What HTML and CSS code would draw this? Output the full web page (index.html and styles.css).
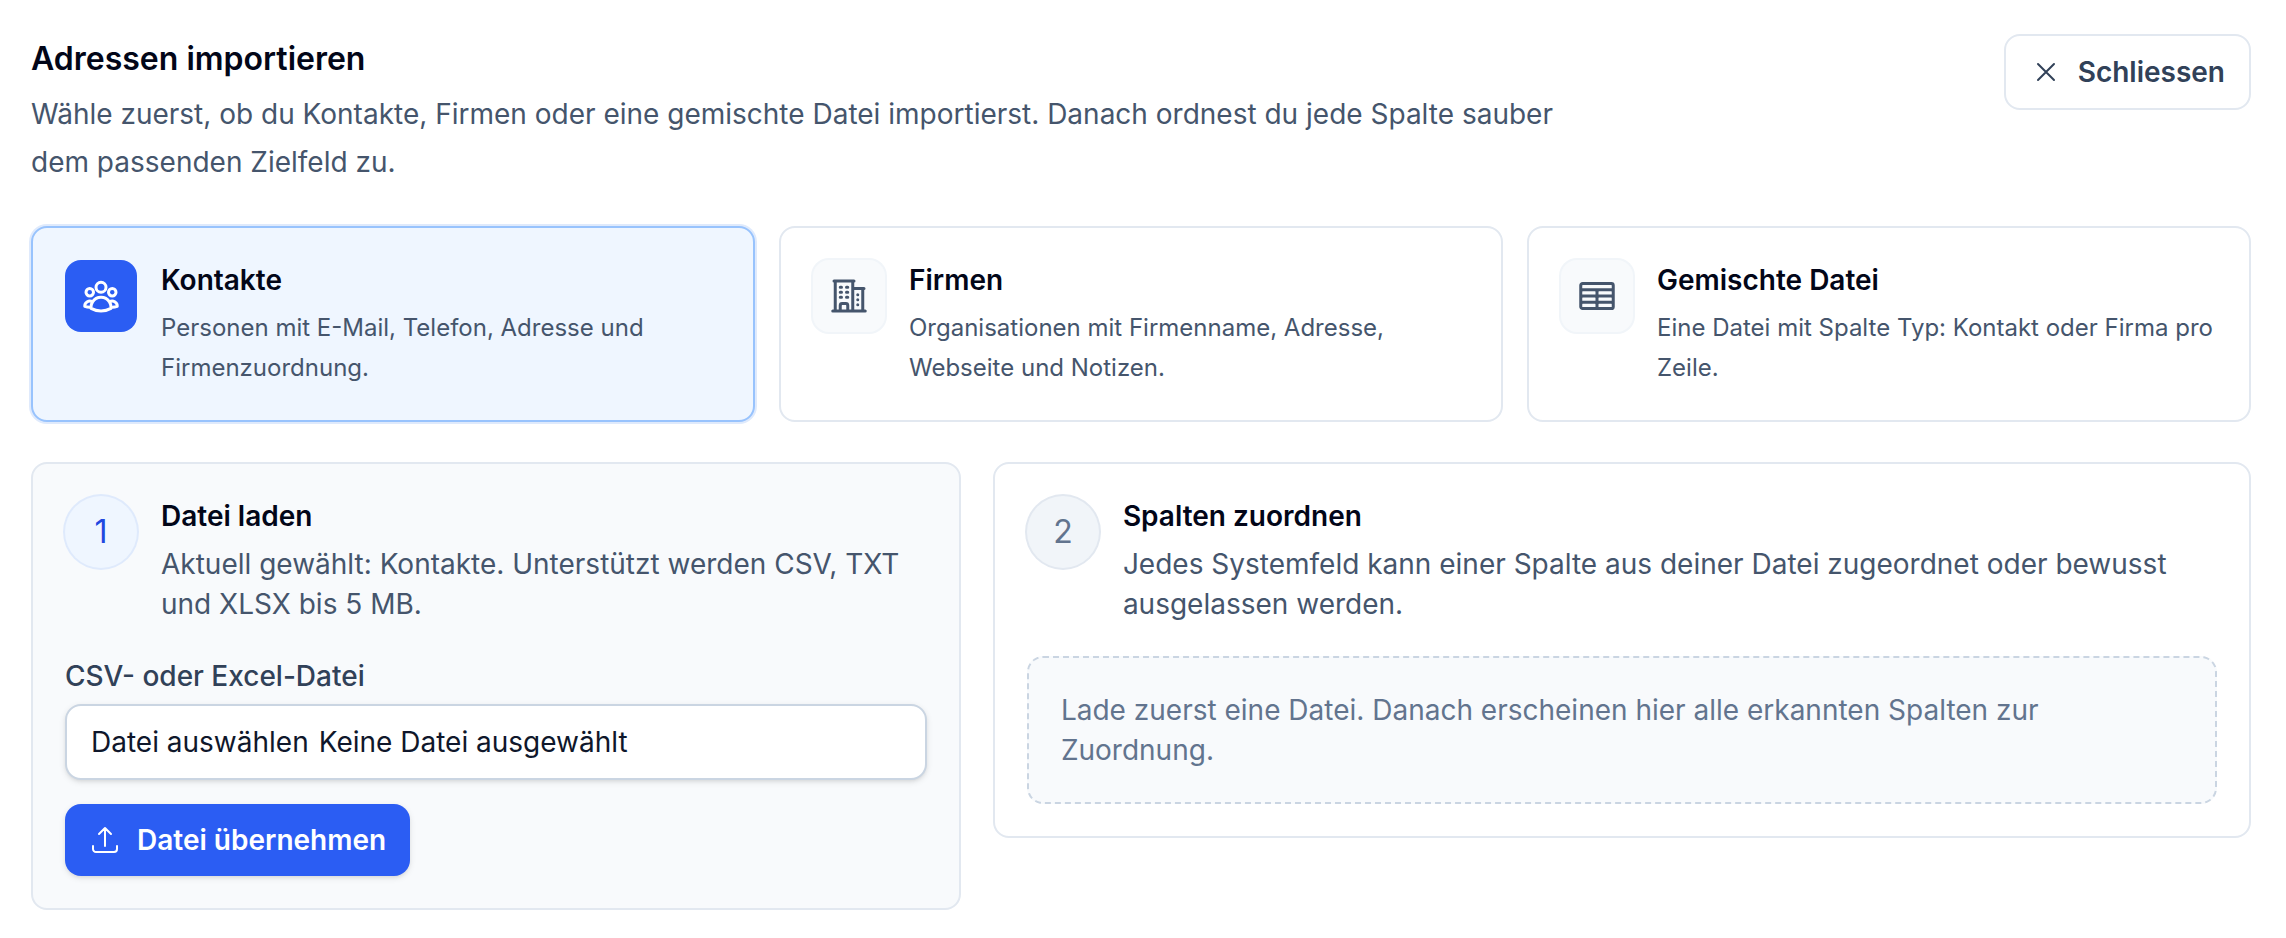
FILE: index.html
```html
<!DOCTYPE html>
<html lang="de">
<head>
    <meta charset="UTF-8">
    <meta name="viewport" content="width=device-width, initial-scale=1.0">
    <title>Adressen importieren</title>
    <link rel="stylesheet" href="styles.css">
</head>
<body>
    <main class="import">
        <header class="import-header">
            <div class="import-intro">
                <h1>Adressen importieren</h1>
                <p>Wähle zuerst, ob du Kontakte, Firmen oder eine gemischte Datei importierst. Danach ordnest du jede Spalte sauber dem passenden Zielfeld zu.</p>
            </div>
            <button type="button" class="button button-close">
                <svg class="icon" viewBox="0 0 24 24" aria-hidden="true"><path d="M6 18 18 6M6 6l12 12"/></svg>
                Schliessen
            </button>
        </header>

        <div class="types">
            <button type="button" class="type type-active" aria-pressed="true">
                <span class="type-icon">
                    <svg class="icon icon-large" viewBox="0 0 24 24" aria-hidden="true"><path d="M18 18.72a9.094 9.094 0 0 0 3.741-.479 3 3 0 0 0-4.682-2.72m.94 3.198.001.031c0 .225-.012.447-.037.666A11.944 11.944 0 0 1 12 21c-2.17 0-4.207-.576-5.963-1.584A6.062 6.062 0 0 1 6 18.719m12 0a5.971 5.971 0 0 0-.941-3.197m0 0A5.995 5.995 0 0 0 12 12.75a5.995 5.995 0 0 0-5.058 2.772m0 0a3 3 0 0 0-4.681 2.72 8.986 8.986 0 0 0 3.74.477m.94-3.197a5.971 5.971 0 0 0-.94 3.197M15 6.75a3 3 0 1 1-6 0 3 3 0 0 1 6 0Zm6 3a2.25 2.25 0 1 1-4.5 0 2.25 2.25 0 0 1 4.5 0Zm-13.5 0a2.25 2.25 0 1 1-4.5 0 2.25 2.25 0 0 1 4.5 0Z"/></svg>
                </span>
                <span class="type-body">
                    <span class="title">Kontakte</span>
                    <span class="type-text">Personen mit E-Mail, Telefon, Adresse und Firmenzuordnung.</span>
                </span>
            </button>
            <button type="button" class="type" aria-pressed="false">
                <span class="type-icon">
                    <svg class="icon icon-large" viewBox="0 0 24 24" aria-hidden="true"><path d="M2.25 21h19.5m-18-18v18m10.5-18v18m6-13.5V21M6.75 6.75h.75m-.75 3h.75m-.75 3h.75m3-6h.75m-.75 3h.75m-.75 3h.75M6.75 21v-3.375c0-.621.504-1.125 1.125-1.125h2.25c.621 0 1.125.504 1.125 1.125V21M3 3h12m-.75 4.5H21m-3.75 3.75h.008v.008h-.008v-.008Zm0 3h.008v.008h-.008v-.008Zm0 3h.008v.008h-.008v-.008Z"/></svg>
                </span>
                <span class="type-body">
                    <span class="title">Firmen</span>
                    <span class="type-text">Organisationen mit Firmenname, Adresse, Webseite und Notizen.</span>
                </span>
            </button>
            <button type="button" class="type" aria-pressed="false">
                <span class="type-icon">
                    <svg class="icon icon-large" viewBox="0 0 24 24" aria-hidden="true"><path d="M3.375 19.5h17.25m-17.25 0a1.125 1.125 0 0 1-1.125-1.125M3.375 19.5h7.5c.621 0 1.125-.504 1.125-1.125m-9.75 0V5.625m0 12.75v-1.5c0-.621.504-1.125 1.125-1.125m18.375 2.625V5.625m0 12.75c0 .621-.504 1.125-1.125 1.125m1.125-1.125v-1.5c0-.621-.504-1.125-1.125-1.125m0 3.75h-7.5A1.125 1.125 0 0 1 12 18.375m9.75-12.75c0-.621-.504-1.125-1.125-1.125H3.375c-.621 0-1.125.504-1.125 1.125m19.5 0v1.5c0 .621-.504 1.125-1.125 1.125M2.25 5.625v1.5c0 .621.504 1.125 1.125 1.125m0 0h17.25m-17.25 0h7.5c.621 0 1.125.504 1.125 1.125M3.375 8.25c-.621 0-1.125.504-1.125 1.125v1.5c0 .621.504 1.125 1.125 1.125m17.25-3.75h-7.5c-.621 0-1.125.504-1.125 1.125m8.625-1.125c.621 0 1.125.504 1.125 1.125v1.5c0 .621-.504 1.125-1.125 1.125m-17.25 0h7.5m-7.5 0c-.621 0-1.125.504-1.125 1.125v1.5c0 .621.504 1.125 1.125 1.125M12 10.875v-1.5m0 1.5c0 .621-.504 1.125-1.125 1.125M12 10.875c0 .621.504 1.125 1.125 1.125m-2.25 0c.621 0 1.125.504 1.125 1.125M13.125 12h7.5m-7.5 0c-.621 0-1.125.504-1.125 1.125M20.625 12c.621 0 1.125.504 1.125 1.125v1.5c0 .621-.504 1.125-1.125 1.125m-17.25 0h7.5M12 14.625v-1.5m0 1.5c0 .621-.504 1.125-1.125 1.125M12 14.625c0 .621.504 1.125 1.125 1.125m-2.25 0c.621 0 1.125.504 1.125 1.125m0 1.5v-1.5m0 0c0-.621.504-1.125 1.125-1.125m0 0h7.5"/></svg>
                </span>
                <span class="type-body">
                    <span class="title">Gemischte Datei</span>
                    <span class="type-text">Eine Datei mit Spalte Typ: Kontakt oder Firma pro Zeile.</span>
                </span>
            </button>
        </div>

        <div class="steps">
            <section class="step step-active">
                <div class="step-head">
                    <span class="step-number">1</span>
                    <div class="step-intro">
                        <h2 class="title">Datei laden</h2>
                        <p>Aktuell gewählt: Kontakte. Unterstützt werden CSV, TXT und XLSX bis 5 MB.</p>
                    </div>
                </div>
                <form class="upload">
                    <label class="upload-label" for="importFile">CSV- oder Excel-Datei</label>
                    <div class="file">
                        <input type="file" id="importFile" class="file-input" accept=".csv,.txt,.xlsx">
                        <span>Datei auswählen</span>
                        <span>Keine Datei ausgewählt</span>
                    </div>
                    <button type="submit" class="button button-primary">
                        <svg class="icon" viewBox="0 0 24 24" aria-hidden="true"><path d="M3 16.5v2.25A2.25 2.25 0 0 0 5.25 21h13.5A2.25 2.25 0 0 0 21 18.75V16.5m-13.5-9L12 3m0 0 4.5 4.5M12 3v13.5"/></svg>
                        Datei übernehmen
                    </button>
                </form>
            </section>

            <section class="step">
                <div class="step-head">
                    <span class="step-number">2</span>
                    <div class="step-intro">
                        <h2 class="title">Spalten zuordnen</h2>
                        <p>Jedes Systemfeld kann einer Spalte aus deiner Datei zugeordnet oder bewusst ausgelassen werden.</p>
                    </div>
                </div>
                <p class="empty">Lade zuerst eine Datei. Danach erscheinen hier alle erkannten Spalten zur Zuordnung.</p>
            </section>
        </div>
    </main>
</body>
</html>
```
FILE: styles.css
```css
* {
    box-sizing: border-box;
}
body {
    margin: 0;
    background-color: #fff;
    color: #45556c;
    font-family: Inter, "Liberation Sans", sans-serif;
    font-size: 28px;
    font-optical-sizing: none;
    line-height: 40px;
    -webkit-font-smoothing: antialiased;
}
h1, h2, p {
    margin: 0;
}
button {
    font: inherit;
    cursor: pointer;
}
.import {
    padding: 34px 35px 24px 31px;
}
.icon {
    width: 32px;
    height: 32px;
    flex-shrink: 0;
    fill: none;
    stroke: currentColor;
    stroke-width: 1.5;
    stroke-linecap: round;
    stroke-linejoin: round;
}
.icon-large {
    width: 40px;
    height: 40px;
    stroke-width: 1.8;
}
.title {
    color: #020618;
    font-size: 28px;
    font-weight: 600;
    line-height: 40px;
}

/* Header */
.import-header {
    display: flex;
    justify-content: space-between;
    align-items: flex-start;
    gap: 32px;
    margin-bottom: 40px;
}
.import-intro {
    max-width: 1536px;
}
.import-intro h1 {
    margin-bottom: 6px;
    color: #020618;
    font-size: 32px;
    font-weight: 600;
    line-height: 50px;
}
.import-intro p {
    line-height: 48px;
}
.button {
    display: inline-flex;
    align-items: center;
    gap: 16px;
    padding: 16px 24px;
    border: none;
    border-radius: 16px;
    font-weight: 600;
    white-space: nowrap;
}
.button-close {
    border: 2px solid #e2e8f0;
    background-color: #fff;
    color: #314158;
}
.button-primary {
    background-color: #2b5df3;
    color: #fff;
    box-shadow: 0 2px 6px rgba(0, 0, 0, 0.1), 0 2px 4px -2px rgba(0, 0, 0, 0.1);
}

/* Import type */
.types {
    display: grid;
    grid-template-columns: repeat(3, 1fr);
    gap: 24px;
    margin-bottom: 40px;
}
.type {
    display: flex;
    align-items: flex-start;
    gap: 24px;
    padding: 32px;
    border: 2px solid #e2e8f0;
    border-radius: 16px;
    background-color: #fff;
    color: #45556c;
    text-align: left;
}
.type-active {
    border-color: #98c3fd;
    background-color: #eff6ff;
    box-shadow: 0 0 0 2px #dfeafc;
}
.type-icon {
    display: flex;
    align-items: center;
    justify-content: center;
    width: 72px;
    height: 72px;
    flex-shrink: 0;
    border-radius: 16px;
    background-color: #f8fafc;
    box-shadow: 0 0 0 2px #f1f5f9;
}
.type-active .type-icon {
    background-color: #2b5df3;
    color: #fff;
    box-shadow: none;
}
.type-body {
    display: flex;
    flex-direction: column;
    gap: 8px;
}
.type-text {
    font-size: 24px;
}

/* Steps */
.steps {
    display: grid;
    grid-template-columns: 85fr 115fr;
    align-items: start;
    gap: 32px;
}
.step {
    padding: 32px;
    border: 2px solid #e2e8f0;
    border-radius: 16px;
}
.step-active {
    background-color: #f8fafc;
}
.step-head {
    display: flex;
    align-items: flex-start;
    gap: 24px;
    margin-bottom: 32px;
}
.step-number {
    display: flex;
    align-items: center;
    justify-content: center;
    width: 72px;
    height: 72px;
    flex-shrink: 0;
    border-radius: 50%;
    background-color: #f1f5f9;
    color: #62748e;
    font-size: 32px;
    box-shadow: 0 0 0 2px #e2e8f0;
}
.step-active .step-number {
    background-color: #eff6ff;
    color: #2148df;
    box-shadow: 0 0 0 2px #dfeafc;
}
.step-intro {
    display: flex;
    flex-direction: column;
    gap: 8px;
}
.upload-label {
    display: block;
    margin-bottom: 8px;
    color: #314158;
    font-weight: 500;
}
.file {
    position: relative;
    display: flex;
    gap: 10px;
    margin-bottom: 24px;
    padding: 16px 24px;
    border: 2px solid #cad5e2;
    border-radius: 16px;
    background-color: #fff;
    color: #0f172b;
    box-shadow: 0 2px 6px rgba(0, 0, 0, 0.1), 0 2px 4px -2px rgba(0, 0, 0, 0.1);
}
/* invisible, covers the whole box so that it stays clickable */
.file-input {
    position: absolute;
    inset: 0;
    width: 100%;
    height: 100%;
    opacity: 0;
    cursor: pointer;
}
.upload .button {
    display: flex;
}
.empty {
    padding: 32px;
    border: 2px dashed #cad5e2;
    border-radius: 16px;
    background-color: #f8fafc;
    color: #62748e;
}

@media (max-width: 1100px) {
    .types, .steps {
        grid-template-columns: 1fr;
    }
}
```
